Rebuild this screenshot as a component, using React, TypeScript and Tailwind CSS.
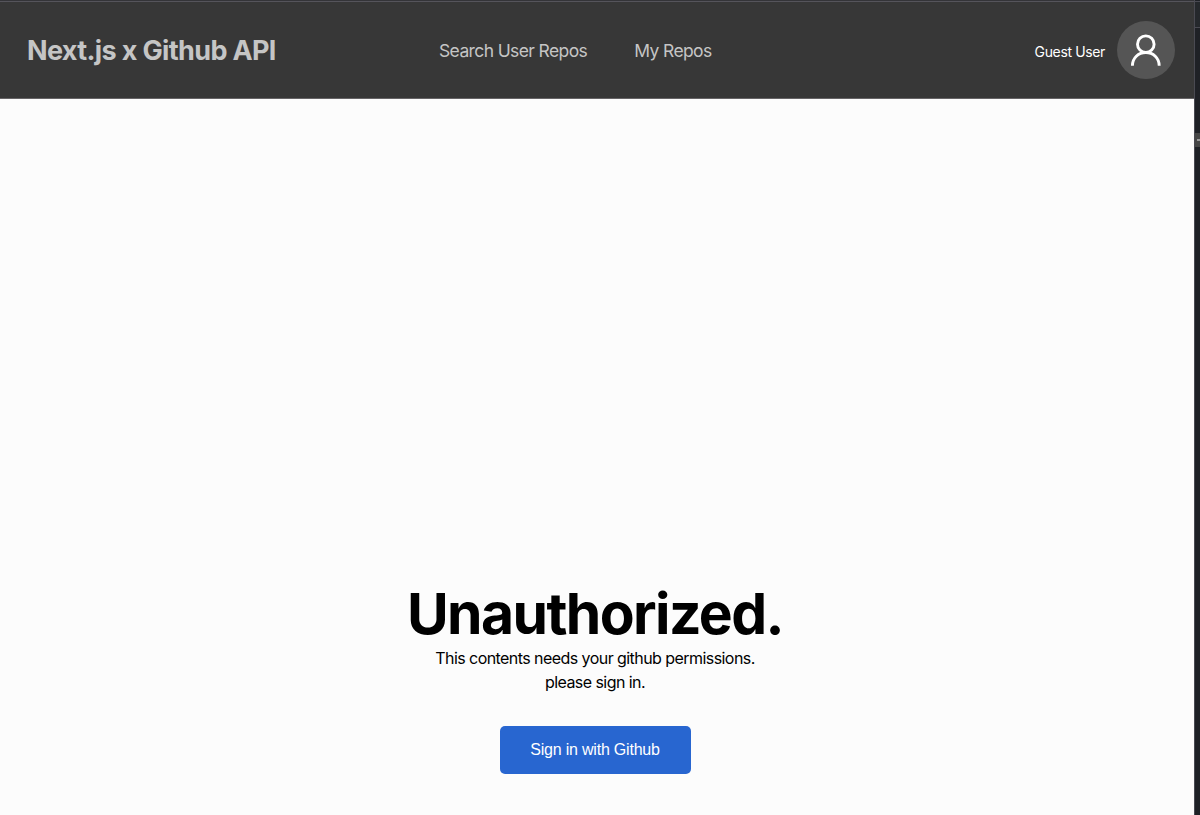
import React from 'react';

const navLinks = [
  { label: 'Search User Repos', href: '#search' },
  { label: 'My Repos', href: '#repos' }
];

const Avatar = () => (
  <div className="w-[58px] h-[58px] rounded-full bg-[#555555] flex items-center justify-center">
    <svg viewBox="0 0 58 58" className="w-[58px] h-[58px]" fill="none" stroke="#ffffff" strokeWidth="2.9">
      <circle cx="28.8" cy="23.2" r="8.3" />
      <path d="M15.4 44.8C15.4 37 21.4 31.5 28.8 31.5C36.2 31.5 42.2 37 42.2 44.8" />
    </svg>
  </div>
);

const Header = () => (
  <header className="flex items-center justify-between h-[97px] pl-[27px] pr-[19px] bg-[#373737] border-b border-[#666466]">
    <h1 className="w-[412px] pt-[2px] text-[27px] leading-8 font-bold tracking-[-0.024em] text-[#c5c5c5]">
      Next.js x Github API
    </h1>
    <nav className="flex flex-1 gap-[47px] pt-px">
      {navLinks.map((link) => (
        <a key={link.label} href={link.href} className="text-[17.5px] leading-6 tracking-[-0.035em] text-[#c5c5c5] whitespace-nowrap">
          {link.label}
        </a>
      ))}
    </nav>
    <div className="flex items-center gap-3">
      <span className="text-sm tracking-[-0.026em] text-white pt-[3px]">Guest User</span>
      <Avatar />
    </div>
  </header>
);

const Unauthorized = () => (
  <main className="flex flex-1 flex-col items-center justify-end pb-[41px] pr-1 text-black">
    <h2 className="text-[57px] leading-[60px] font-bold tracking-[-0.028em]">Unauthorized.</h2>
    <p className="mt-[2px] text-base leading-6 text-center tracking-[-0.035em]">
      This contents needs your github permissions.
      <br />
      please sign in.
    </p>
    <button className="mt-8 w-[191px] h-12 rounded-[5px] bg-[#2866d0] text-white text-base tracking-[-0.013em] font-['Liberation_Sans',sans-serif]">
      Sign in with Github
    </button>
  </main>
);

const App = () => {
  return (
    <div className="flex h-screen overflow-hidden bg-[#1f2126] font-['Inter',sans-serif]">
      <div className="flex flex-1 flex-col bg-[#fcfcfc]">
        <div className="h-px bg-[#343438]" />
        <div className="h-px bg-[#55545b]" />
        <Header />
        <Unauthorized />
      </div>

      {/* Edge of the dev tools panel */}
      <div className="flex flex-col w-[6px] pt-px border-l border-[#4a4a52]">
        <div className="h-[27px] border-y border-[#4a4a52] bg-[#25282c]" />
        <div className="h-[105px]" />
        <div className="flex items-center justify-end h-[14px] bg-[#464646]">
          <div className="w-[3px] h-[2px] bg-[#9a9a9a]" />
        </div>
      </div>
    </div>
  );
};

export default App;
